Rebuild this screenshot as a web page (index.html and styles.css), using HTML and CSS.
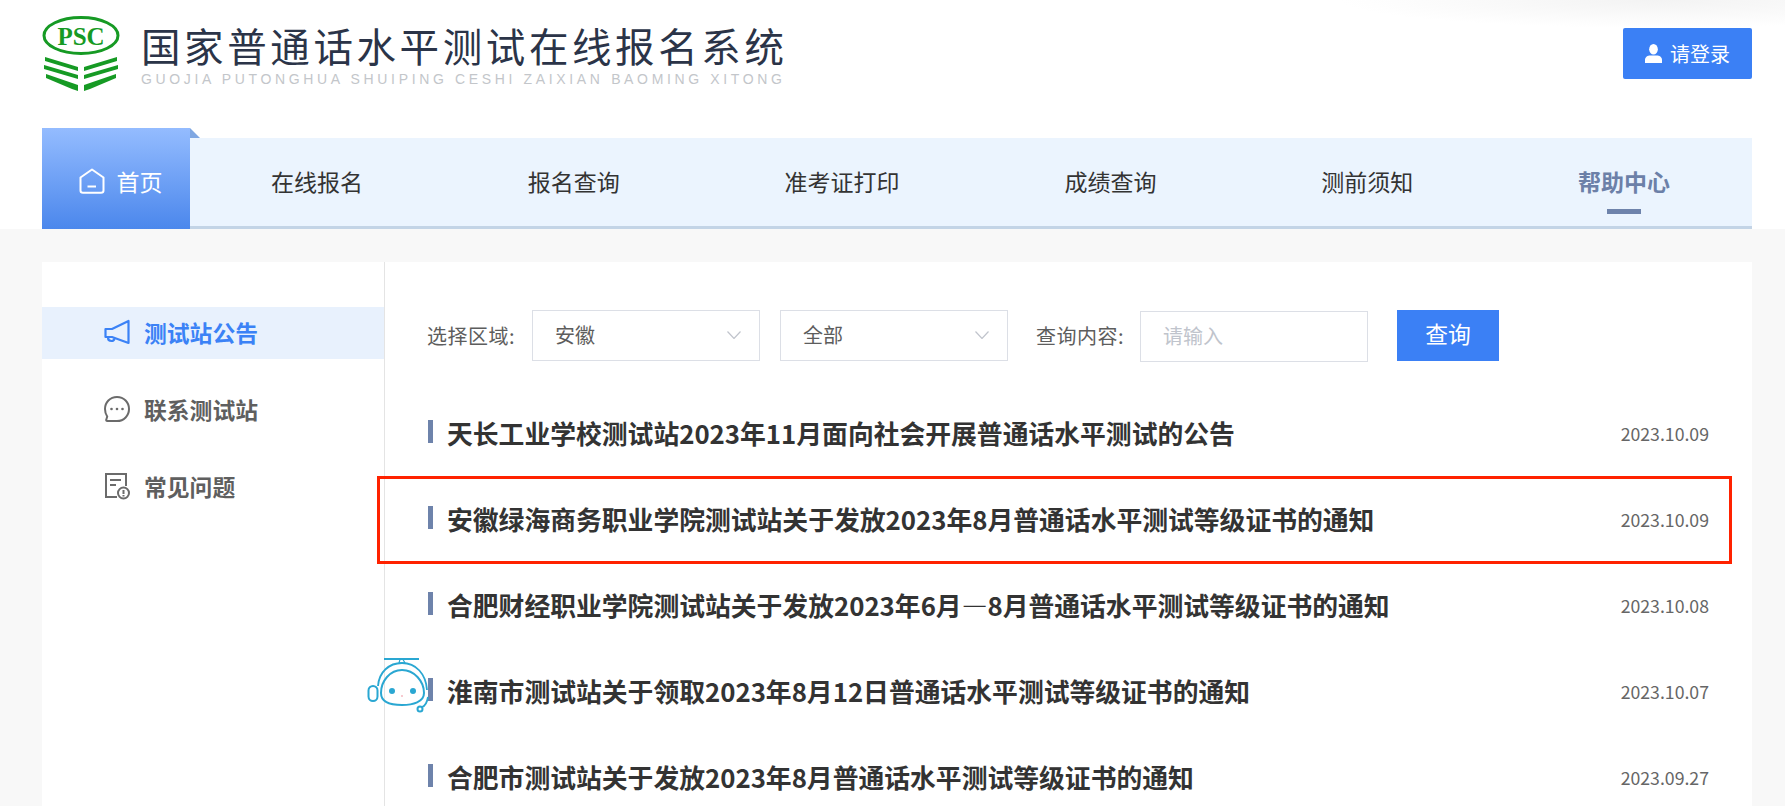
FILE: index.html
```html
<!DOCTYPE html>
<html lang="zh-CN">
<head>
  <meta charset="UTF-8" />
  <title>国家普通话水平测试在线报名系统</title>
  <link rel="stylesheet" href="styles.css">
</head>
<body>
  <div class="header">
    <div class="top-bar">
      <div class="brand">
        <svg class="logo" viewBox="0 0 78 76" width="78" height="76">
          <ellipse cx="39" cy="19.5" rx="37" ry="18" fill="none" stroke="#169a24" stroke-width="3"/>
          <text class="logo-text" x="39" y="28.500" text-anchor="middle">PSC</text>
          <g fill="#169a24">
            <path d="M3 41 L36 51 L36 55 L3 45 Z"/>
            <path d="M2 49 L36 59 L36 63 L2 53 Z"/>
            <path d="M4 58 L36 69 L36 75 L30 73 L4 62 Z"/>
            <path d="M75 41 L42 51 L42 55 L75 45 Z"/>
            <path d="M76 49 L42 59 L42 63 L76 53 Z"/>
            <path d="M74 58 L42 69 L42 75 L48 73 L74 62 Z"/>
          </g>
        </svg>
        <div class="brand-text">
          <div class="brand-title">国家普通话水平测试在线报名系统</div>
          <div class="brand-sub">GUOJIA PUTONGHUA SHUIPING CESHI ZAIXIAN BAOMING XITONG</div>
        </div>
      </div>
      <a class="login-btn">
        <svg viewBox="0 0 18 20" width="17" height="19">
          <ellipse cx="9" cy="5.5" rx="4.6" ry="5.5" fill="#fff"/>
          <path d="M0 20 V16.5 C0 13.5 3 12 5.5 12 H12.5 C15 12 18 13.500 18 16.500 V20 Z" fill="#fff"/>
        </svg>
        请登录
      </a>
    </div>

    <div class="nav">
      <a class="nav-home">
        <svg viewBox="0 0 26 26" width="26" height="26" fill="none" stroke="#fff" stroke-width="2">
          <path d="M13 1.500 L24.500 9.500 V22.500 Q24.500 24.800 22 24.800 H4 Q1.500 24.800 1.500 22.500 V9.500 Z" stroke-linejoin="round"/>
          <path d="M8.500 18.500 H17"/>
        </svg>
        首页
      </a>
      <div class="nav-list">
        <a class="nav-item">在线报名</a>
        <a class="nav-item">报名查询</a>
        <a class="nav-item">准考证打印</a>
        <a class="nav-item">成绩查询</a>
        <a class="nav-item">测前须知</a>
        <a class="nav-item active">帮助中心</a>
      </div>
    </div>
  </div>

  <div class="card">
    <div class="sidebar">
      <a class="side-item active">
        <svg viewBox="0 0 26 26" width="26" height="26" fill="none" stroke="#3b82f6" stroke-width="2.200">
          <path d="M24.500 2 V24 L8 18 H1.500 V10 H8 Z" stroke-linejoin="round"/>
          <path d="M4 18.500 Q4 22 7.500 22 Q10 22 10.500 19.500"/>
        </svg>
        测试站公告
      </a>
      <a class="side-item">
        <svg viewBox="0 0 26 26" width="26" height="26" fill="none" stroke="#6b6b6b" stroke-width="2">
          <path d="M13 1 C20 1 25 6.500 25 13 C25 19.500 20 25 13 25 H3.500 Q1.500 25 2.500 23 L3.200 20.500 C1.800 18.500 1 16 1 13 C1 6.500 6 1 13 1 Z"/>
          <circle cx="7.500" cy="13" r="1.300" fill="#6b6b6b" stroke="none"/>
          <circle cx="13" cy="13" r="1.300" fill="#6b6b6b" stroke="none"/>
          <circle cx="18.500" cy="13" r="1.300" fill="#6b6b6b" stroke="none"/>
        </svg>
        联系测试站
      </a>
      <a class="side-item">
        <svg viewBox="0 0 26 28" width="26" height="28" fill="none" stroke="#6b6b6b" stroke-width="2">
          <path d="M13 25 H2 V2 H22 V14"/>
          <path d="M6 8 H17 M6 13 H12"/>
          <circle cx="19.500" cy="21" r="5.500"/>
          <path d="M19.500 18 V22 M19.500 23 V24.500"/>
        </svg>
        常见问题
      </a>
    </div>

    <div class="main">
      <div class="filter">
        <span class="filter-label">选择区域:</span>
        <div class="select">安徽
          <svg viewBox="0 0 14 8" width="14" height="8" fill="none" stroke="#c0c4cc" stroke-width="1.200"><path d="M0.500 0.500 L7 7.500 L13.500 0.500"/></svg>
        </div>
        <div class="select">全部
          <svg viewBox="0 0 14 8" width="14" height="8" fill="none" stroke="#c0c4cc" stroke-width="1.200"><path d="M0.500 0.500 L7 7.500 L13.500 0.500"/></svg>
        </div>
        <span class="filter-label second">查询内容:</span>
        <input class="search-input" type="text" placeholder="请输入">
        <button class="search-btn">查询</button>
      </div>

      <ul class="notice-list">
        <li class="notice"><span class="notice-title">天长工业学校测试站2023年11月面向社会开展普通话水平测试的公告</span><span class="notice-date">2023.10.09</span></li>
        <li class="notice"><span class="notice-title">安徽绿海商务职业学院测试站关于发放2023年8月普通话水平测试等级证书的通知</span><span class="notice-date">2023.10.09</span></li>
        <li class="notice"><span class="notice-title">合肥财经职业学院测试站关于发放2023年6月—8月普通话水平测试等级证书的通知</span><span class="notice-date">2023.10.08</span></li>
        <li class="notice"><span class="notice-title">淮南市测试站关于领取2023年8月12日普通话水平测试等级证书的通知</span><span class="notice-date">2023.10.07</span></li>
        <li class="notice"><span class="notice-title">合肥市测试站关于发放2023年8月普通话水平测试等级证书的通知</span><span class="notice-date">2023.09.27</span></li>
      </ul>
    </div>
  </div>

  <!-- red annotation box -->
  <div class="highlight"></div>

  <!-- floating helper robot -->
  <svg class="robot" viewBox="0 0 62 56" width="62" height="56" fill="none" stroke="#2aa7d2" stroke-width="1.800">
    <path d="M17 2 H52" stroke-width="2"/>
    <path d="M33 2.500 L32 6 H38 L36 2.500" stroke-width="1.200"/>
    <path d="M11 29 C12 15 22 6 35 6 C49 6 59 17 60 33"/>
    <path d="M35 13 C23 13 14 24 14 36 C14 45 24 48 35 48 C46 48 57 45 57 36 C57 24 47 13 35 13 Z" stroke-width="2"/>
    <rect x="1.500" y="29" width="9" height="15" rx="4.500" stroke-width="2"/>
    <circle cx="25" cy="34" r="3" fill="#2aa7d2" stroke="none"/>
    <circle cx="46" cy="34" r="3" fill="#2aa7d2" stroke="none"/>
    <circle cx="35" cy="39" r="1" fill="#f5b8c0" stroke="none"/>
    <path d="M61 40 C60 46 58 49 55 50"/>
    <circle cx="53" cy="52" r="2.500" stroke-width="2"/>
  </svg>
</body>
</html>
```

FILE: styles.css
```css
* {
  box-sizing: border-box;
}

html, body {
  height: 100%;
}

body {
  margin: 0;
  position: relative;
  overflow: hidden;
  background: #f8f8f8;
  font-family: "Noto Sans CJK SC", "Noto Sans", sans-serif;
  color: #333;
}

a {
  text-decoration: none;
  color: inherit;
}

/* Header */
.header {
  height: 229px;
  padding: 0 33px 0 42px;
  background: radial-gradient(ellipse 320px 28px at 1660px 0, #f3f3f3, rgba(255, 255, 255, 0)) #fff;
}

.top-bar {
  display: flex;
  justify-content: space-between;
  height: 128px;
  padding-top: 16px;
}

.brand {
  display: flex;
  align-items: flex-start;
  gap: 21px;
}

.logo-text {
  font-family: "Liberation Serif", serif;
  font-weight: 700;
  font-size: 25px;
  fill: #169a24;
}

.brand-title {
  font-size: 39.500px;
  line-height: 46px;
  letter-spacing: 3.600px;
  color: #2b3448;
  margin-top: 6px;
  white-space: nowrap;
}

.brand-sub {
  font-family: "Liberation Sans", sans-serif;
  font-size: 14px;
  line-height: 16px;
  letter-spacing: 3.650px;
  color: #c3c6ca;
  white-space: nowrap;
  margin-top: 3px;
}

.login-btn {
  display: flex;
  align-items: center;
  justify-content: center;
  gap: 8px;
  width: 129px;
  height: 51px;
  margin-top: 12px;
  background: #3b80f5;
  border-radius: 2px;
  color: #fff;
  font-size: 20px;
}

.nav {
  display: flex;
  height: 101px;
}

.nav-home {
  position: relative;
  display: flex;
  align-items: center;
  justify-content: center;
  gap: 12px;
  width: 148px;
  padding: 5px 0 0 9px;
  background: linear-gradient(to bottom, #94bcff, #4b87ec);
  color: #fff;
  font-size: 23px;
}

.nav-home::after {
  content: "";
  position: absolute;
  top: 0;
  left: 100%;
  border-style: solid;
  border-width: 10px 0 0 10px;
  border-color: transparent transparent transparent #7fa7e2;
}

.nav-list {
  flex: 1;
  display: flex;
  align-items: center;
  gap: 164.800px;
  margin-top: 10px;
  padding-left: 81px;
  padding-bottom: 3px;
  background: #ebf4fe;
  border-bottom: 3px solid #c3d4e6;
  font-size: 23px;
  white-space: nowrap;
}

.nav-item {
  position: relative;
}

.nav-item.active {
  font-weight: 700;
  color: #6c80a8;
}

.nav-item.active::after {
  content: "";
  position: absolute;
  left: 50%;
  top: 100%;
  margin-left: -17px;
  margin-top: 11px;
  width: 34px;
  height: 5px;
  background: #6e83ab;
}

/* Content */
.card {
  display: flex;
  margin: 33px 33px 0 42px;
  height: calc(100vh - 262px);
  overflow: hidden;
  background: #fff;
}

.sidebar {
  flex: none;
  width: 343px;
  padding-top: 45px;
  border-right: 1px solid #e4e4e4;
}

.side-item {
  display: flex;
  align-items: center;
  gap: 14px;
  height: 52px;
  margin-bottom: 25px;
  padding-left: 62px;
  padding-bottom: 2px;
  font-size: 22.800px;
  font-weight: 700;
  color: #5f5f5f;
}

.side-item.active {
  background: #e8f1fd;
  color: #3b82f6;
}

.main {
  flex: 1;
  padding: 48px 0 0 42px;
}

.filter {
  display: flex;
  align-items: flex-start;
  height: 52px;
  font-size: 20px;
  color: #5d5d5d;
}

.filter-label {
  width: 105px;
  line-height: 51px;
  letter-spacing: 0.500px;
  white-space: nowrap;
}

.filter-label.second {
  width: 104px;
  margin-left: 28px;
}

.select {
  display: flex;
  align-items: center;
  justify-content: space-between;
  width: 228px;
  height: 51px;
  margin-right: 20px;
  padding: 0 18px 2px 22px;
  border: 1px solid #dcdfe6;
  background: #fff;
  color: #5d5d5d;
}

.select:nth-of-type(2) {
  margin-right: 0;
}

.search-input {
  width: 228px;
  height: 51px;
  margin-top: 1px;
  padding: 0 22px 3px;
  border: 1px solid #dcdfe6;
  border-radius: 0;
  outline: none;
  font-family: inherit;
  font-size: 20px;
}

.search-input::placeholder {
  color: #c0c4cc;
}

.search-btn {
  width: 102px;
  height: 51px;
  margin-left: 29px;
  padding: 0 0 4px;
  border: 0;
  background: #3b80f5;
  color: #fff;
  font-family: inherit;
  font-size: 22.800px;
}

.notice-list {
  list-style: none;
  margin: 29px 0 0 1px;
  padding: 0;
  width: 1281px;
}

.notice {
  display: flex;
  align-items: center;
  justify-content: space-between;
  height: 86px;
}

.notice-title {
  position: relative;
  margin-top: -4px;
  padding-left: 19px;
  font-size: 25.800px;
  font-weight: 700;
  color: #333;
  white-space: nowrap;
}

.notice-title::before {
  content: "";
  position: absolute;
  left: 0;
  top: 50%;
  margin-top: -12px;
  width: 5px;
  height: 23px;
  background: #6e83ab;
}

.notice-date {
  margin-top: -2px;
  font-size: 17.700px;
  color: #666;
}

/* Overlays */
.highlight {
  position: absolute;
  left: 377px;
  top: 476px;
  width: 1355px;
  height: 88px;
  border: 3px solid #ff2200;
}

.robot {
  position: absolute;
  left: 367px;
  top: 657px;
}
```
